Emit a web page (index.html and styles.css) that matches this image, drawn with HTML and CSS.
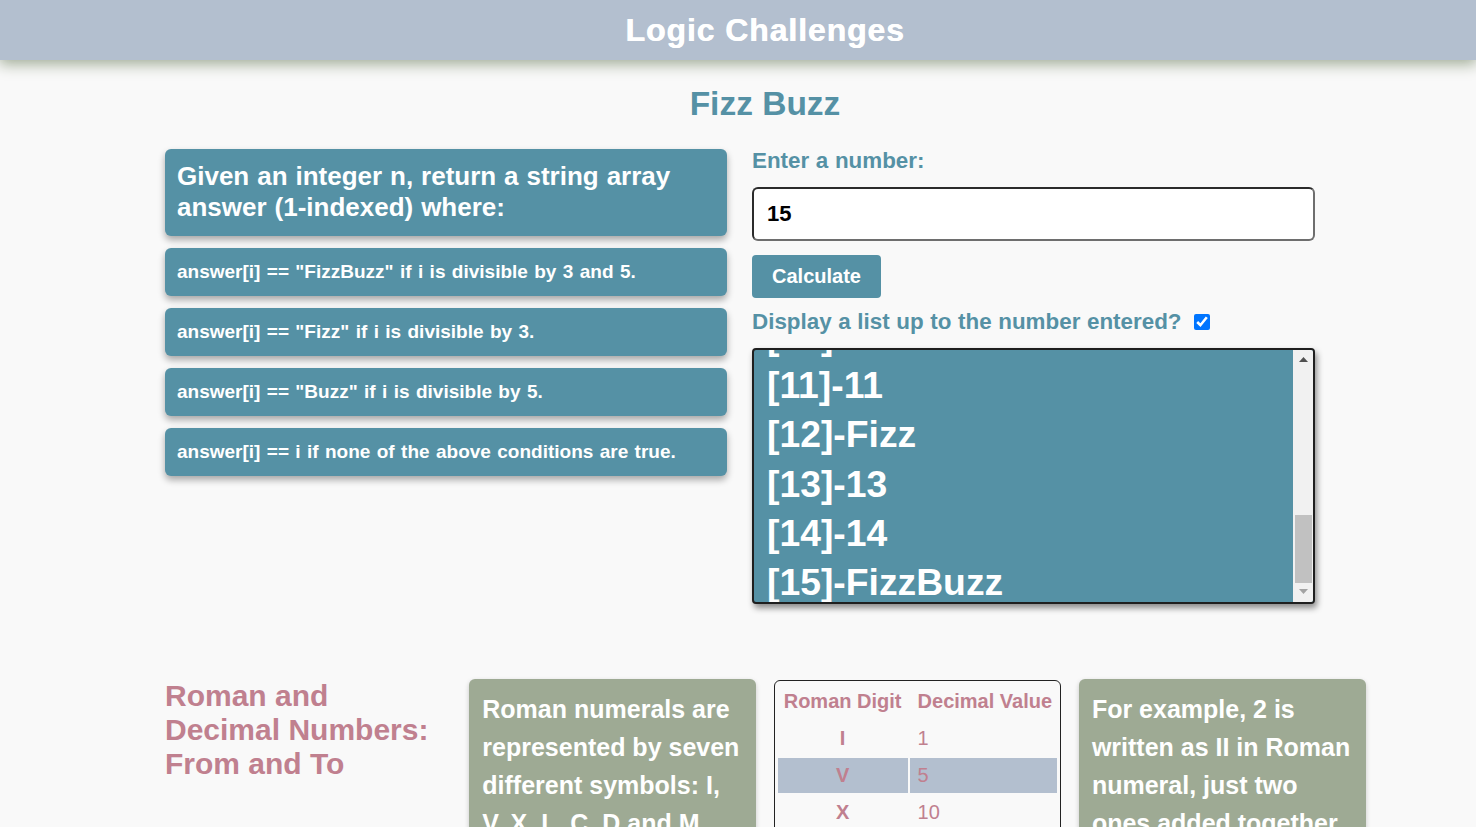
FILE: index.html
```
<!DOCTYPE html>
<html lang="en">
<head>
<meta charset="utf-8">
<title>Logic Challenges</title>
<link rel="stylesheet" href="styles.css">
</head>
<body>
<header class="topbar">
  <h1 class="topbar-title">Logic Challenges</h1>
</header>
<main class="page">
  <section class="challenge">
    <h2 class="challenge-title">Fizz Buzz</h2>
    <div class="fizz-grid">
      <div class="rules">
        <div class="card card-lead">Given an integer n, return a string array answer (1-indexed) where:</div>
        <div class="card card-rule">answer[i] == "FizzBuzz" if i is divisible by 3 and 5.</div>
        <div class="card card-rule">answer[i] == "Fizz" if i is divisible by 3.</div>
        <div class="card card-rule">answer[i] == "Buzz" if i is divisible by 5.</div>
        <div class="card card-rule">answer[i] == i if none of the above conditions are true.</div>
      </div>
      <form class="controls">
        <label class="field-label" for="num">Enter a number:</label>
        <input class="num-input" id="num" type="text" value="15">
        <button class="calc-btn" type="button">Calculate</button>
        <div class="check-row">
          <span class="field-label">Display a list up to the number entered?</span>
          <input class="check" type="checkbox" checked>
        </div>
        <div class="result-list">
          <div class="result-viewport" id="results">
            <div class="result-item">[1]-1</div>
            <div class="result-item">[2]-2</div>
            <div class="result-item">[3]-Fizz</div>
            <div class="result-item">[4]-4</div>
            <div class="result-item">[5]-Buzz</div>
            <div class="result-item">[6]-Fizz</div>
            <div class="result-item">[7]-7</div>
            <div class="result-item">[8]-8</div>
            <div class="result-item">[9]-Fizz</div>
            <div class="result-item">[10]-Buzz</div>
            <div class="result-item">[11]-11</div>
            <div class="result-item">[12]-Fizz</div>
            <div class="result-item">[13]-13</div>
            <div class="result-item">[14]-14</div>
            <div class="result-item">[15]-FizzBuzz</div>
          </div>
          <div class="scrollbar" aria-hidden="true">
            <div class="sb-btn">
              <svg width="9" height="5" viewBox="0 0 9 5"><path d="M0 5 L4.5 0 L9 5 Z" fill="#505050"/></svg>
            </div>
            <div class="sb-track"><div class="sb-thumb"></div></div>
            <div class="sb-btn">
              <svg width="9" height="5" viewBox="0 0 9 5"><path d="M0 0 L4.5 5 L9 0 Z" fill="#a3a3a3"/></svg>
            </div>
          </div>
        </div>
      </form>
    </div>
  </section>
  <section class="roman">
    <h3 class="roman-title">Roman and Decimal Numbers: From and To</h3>
    <div class="note">Roman numerals are represented by seven different symbols: I, V, X, L, C, D and M.</div>
    <div class="table-box">
      <table class="roman-table">
        <thead>
          <tr><th class="col-digit">Roman Digit</th><th class="col-value">Decimal Value</th></tr>
        </thead>
        <tbody>
          <tr><td class="col-digit">I</td><td class="col-value">1</td></tr>
          <tr class="row-hl"><td class="col-digit">V</td><td class="col-value">5</td></tr>
          <tr><td class="col-digit">X</td><td class="col-value">10</td></tr>
          <tr><td class="col-digit">L</td><td class="col-value">50</td></tr>
        </tbody>
      </table>
    </div>
    <div class="note">For example, 2 is written as II in Roman numeral, just two ones added together.</div>
  </section>
</main>
<script src="script.js"></script>
</body>
</html>
```
FILE: styles.css
```
* { box-sizing: border-box; }
html, body { margin: 0; padding: 0; }
body {
  background: #f9f9f9;
  font-family: "Liberation Sans", Arial, sans-serif;
  overflow: hidden;
}
.topbar {
  height: 60px;
  background: #b3bfcf;
  display: flex;
  align-items: center;
  justify-content: center;
  box-shadow: 0 3px 14px 1px #9eaa94;
  position: relative;
  z-index: 1;
  padding-left: 54px;
}
.topbar-title {
  margin: 0;
  color: #fff;
  font-size: 32px;
  letter-spacing: 0.9px;
  font-weight: bold;
  line-height: 36px;
  text-shadow: 0.6px 0 0 #fff;
}
.page {
  width: 1150px;
  margin: 0 auto;
  padding-left: 2px;
}
.challenge-title {
  margin: 25px 0 0;
  padding-left: 52px;
  text-align: center;
  color: #5591a5;
  font-size: 33.5px;
  line-height: 38px;
  font-weight: bold;
}
.fizz-grid {
  margin-top: 26px;
  display: grid;
  grid-template-columns: 562px 563px;
  column-gap: 25px;
  align-items: start;
}
.rules {
  display: flex;
  flex-direction: column;
  gap: 12px;
}
.card {
  background: #5591a5;
  color: #fff;
  border-radius: 6px;
  box-shadow: 0 4px 7px rgba(0, 0, 0, 0.33);
  font-weight: bold;
}
.card-lead {
  padding: 12px 12px 13px;
  font-size: 26px;
  line-height: 31px;
  word-spacing: 0.7px;
}
.card-rule {
  padding: 13px 12px 13px;
  font-size: 19px;
  line-height: 22px;
  word-spacing: 1.1px;
}
.controls {
  margin: 0;
  display: flex;
  flex-direction: column;
  align-items: flex-start;
}
.field-label {
  color: #5591a5;
  font-size: 22.4px;
  line-height: 24px;
  font-weight: bold;
  word-spacing: 0.4px;
}
.num-input {
  margin-top: 14px;
  width: 563px;
  height: 54px;
  border: 2px solid #2b2b2b;
  border-bottom-color: #6e6e6e;
  border-right-color: #6e6e6e;
  border-radius: 6px;
  background: #fff;
  padding: 0 13px;
  font-family: "Liberation Sans", Arial, sans-serif;
  font-size: 22px;
  font-weight: bold;
  color: #000;
  outline: none;
}
.calc-btn {
  margin-top: 14px;
  height: 43px;
  width: 129px;
  border: none;
  border-radius: 4px;
  background: #5591a5;
  color: #fff;
  font-family: "Liberation Sans", Arial, sans-serif;
  font-size: 20px;
  font-weight: bold;
  padding: 0;
}
.check-row {
  margin-top: 12px;
  display: flex;
  align-items: center;
  gap: 12px;
  height: 24px;
}
.check {
  margin: 0;
  width: 16px;
  height: 16px;
  accent-color: #0075ff;
}
.result-list {
  margin-top: 14px;
  width: 563px;
  height: 256px;
  display: flex;
  background: #5591a5;
  border: 2px solid #1f1f1f;
  border-radius: 4px;
  box-shadow: 2px 4px 6px rgba(0, 0, 0, 0.45);
  overflow: hidden;
}
.result-viewport {
  flex: 1;
  overflow: hidden;
  padding: 0 13px;
}
.result-item {
  color: #fff;
  font-size: 37.3px;
  line-height: 49.3px;
  font-weight: bold;
}
.scrollbar {
  width: 20px;
  flex: none;
  background: #f1f1f1;
  display: flex;
  flex-direction: column;
  padding: 1px 0 2px;
}
.sb-btn {
  height: 17px;
  flex: none;
  display: flex;
  align-items: center;
  justify-content: center;
  padding-left: 1px;
}
.sb-track {
  flex: 1;
  display: flex;
  flex-direction: column;
  justify-content: flex-end;
  padding: 0 1px 0 2px;
}
.sb-thumb {
  height: 68px;
  background: #c1c1c1;
}
.roman {
  margin-top: 75px;
  width: 1201px;
  display: grid;
  grid-template-columns: 286px 287px 286px 287px;
  column-gap: 18.3px;
  align-items: start;
}
.roman-title {
  margin: 0;
  color: #c0808f;
  font-size: 30px;
  line-height: 34px;
  font-weight: bold;
}
.note {
  background: #9eaa94;
  color: #fff;
  border-radius: 6px;
  box-shadow: 0 2px 5px rgba(0, 0, 0, 0.2);
  padding: 11px 13px;
  font-size: 25px;
  line-height: 38px;
  font-weight: bold;
}
.table-box {
  margin-top: 1px;
  margin-left: -1px;
  border: 1px solid #222;
  border-radius: 6px;
  padding: 1px;
}
.roman-table {
  width: 100%;
  border-spacing: 2px;
  color: #c0808f;
  font-size: 20px;
  white-space: nowrap;
}
.roman-table th, .roman-table td {
  height: 35px;
  padding: 0;
}
.roman-table th { font-weight: bold; }
.roman-table .col-digit { text-align: center; width: 130px; }
.roman-table .col-value { text-align: left; padding-left: 8px; }
.roman-table td.col-digit { font-weight: bold; }
.roman-table td.col-value { font-weight: normal; }
.row-hl td { background: #b3bfcf; }
```
FILE: script.js
```
var list = document.getElementById('results');
list.scrollTop = list.scrollHeight - list.clientHeight - 5;
```
